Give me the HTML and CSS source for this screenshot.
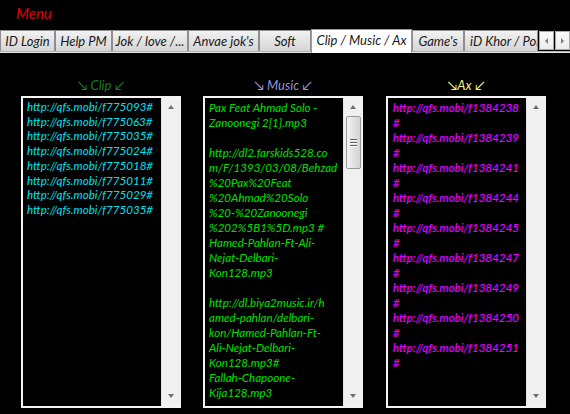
FILE: index.html
```html
<!DOCTYPE html>
<html>
<head>
<meta charset="utf-8">
<link rel="stylesheet" href="styles.css">
</head>
<body>
<div class="menu">Menu</div>
<div class="tabs">
  <div class="tab w55">ID Login</div>
  <div class="tab w56">Help PM</div>
  <div class="tab w76">Jok / love /...</div>
  <div class="tab w71">Anvae jok's</div>
  <div class="tab w52">Soft</div>
  <div class="tab sel w101">Clip / Music / Ax</div>
  <div class="tab w52">Game's</div>
  <div class="tab w74 cut">iD Khor / Pol</div>
  <div class="arrows">
    <div class="abtn"><span class="tri-l"></span></div>
    <div class="abtn"><span class="tri-r"></span></div>
  </div>
</div>
<div class="panels">
  <div class="col">
    <div class="head clip">↘ Clip ↙</div>
    <div class="box">
      <div class="content c-clip">
        <div>http://qfs.mobi/f775093#</div>
        <div>http://qfs.mobi/f775063#</div>
        <div>http://qfs.mobi/f775035#</div>
        <div>http://qfs.mobi/f775024#</div>
        <div>http://qfs.mobi/f775018#</div>
        <div>http://qfs.mobi/f775011#</div>
        <div>http://qfs.mobi/f775029#</div>
        <div>http://qfs.mobi/f775035#</div>
      </div>
      <div class="sb"><span class="up"></span><span class="down"></span></div>
    </div>
  </div>
  <div class="col">
    <div class="head music">↘ Music ↙</div>
    <div class="box">
      <div class="content c-music">
        <div>Pax Feat Ahmad Solo -</div>
        <div>Zanoonegi 2[1].mp3</div>
        <div>&nbsp;</div>
        <div>http://dl2.farskids528.co</div>
        <div>m/F/1393/03/08/Behzad</div>
        <div>%20Pax%20Feat</div>
        <div>%20Ahmad%20Solo</div>
        <div>%20-%20Zanoonegi</div>
        <div>%202%5B1%5D.mp3 #</div>
        <div>Hamed-Pahlan-Ft-Ali-</div>
        <div>Nejat-Delbari-</div>
        <div>Kon128.mp3</div>
        <div>&nbsp;</div>
        <div>http://dl.biya2music.ir/h</div>
        <div>amed-pahlan/delbari-</div>
        <div>kon/Hamed-Pahlan-Ft-</div>
        <div>Ali-Nejat-Delbari-</div>
        <div>Kon128.mp3#</div>
        <div>Fallah-Chapoone-</div>
        <div>Kija128.mp3</div>
      </div>
      <div class="sb"><span class="up"></span><span class="thumb"><i></i><i></i><i></i></span><span class="down"></span></div>
    </div>
  </div>
  <div class="col">
    <div class="head ax">↘Ax ↙</div>
    <div class="box">
      <div class="content c-ax">
        <div>http://qfs.mobi/f1384238</div><div>#</div>
        <div>http://qfs.mobi/f1384239</div><div>#</div>
        <div>http://qfs.mobi/f1384241</div><div>#</div>
        <div>http://qfs.mobi/f1384244</div><div>#</div>
        <div>http://qfs.mobi/f1384245</div><div>#</div>
        <div>http://qfs.mobi/f1384247</div><div>#</div>
        <div>http://qfs.mobi/f1384249</div><div>#</div>
        <div>http://qfs.mobi/f1384250</div><div>#</div>
        <div>http://qfs.mobi/f1384251</div><div>#</div>
      </div>
      <div class="sb"><span class="up"></span><span class="down"></span></div>
    </div>
  </div>
</div>
</body>
</html>
```
FILE: styles.css
```css
html, body {
  margin: 0;
  padding: 0;
  background: #000;
  width: 570px;
  height: 414px;
  overflow: hidden;
  font-family: Lato, "Open Sans", sans-serif;
  font-style: italic;
  font-weight: 400;
}
.menu {
  height: 29px;
  box-sizing: border-box;
  padding: 4px 0 0 16px;
  color: #e00000;
  font-size: 15px;
  line-height: 18px;
}
.tabs {
  display: flex;
  align-items: flex-end;
  height: 24px;
  position: relative;
  box-sizing: border-box;
}
.tabs::after {
  content: "";
  position: absolute;
  left: 0;
  right: 0;
  bottom: 0;
  height: 2px;
  background: #e6e6e6;
  border-top: 1px solid #b0b0b0;
  box-sizing: border-box;
}
.tab {
  box-sizing: border-box;
  height: 21px;
  margin-bottom: 2px;
  border: 1px solid #8e8e8e;
  border-bottom: none;
  background: linear-gradient(#f2f2f2, #e3e3e3 50%, #d6d6d6);
  color: #1a1a1a;
  font-size: 13px;
  line-height: 20px;
  text-align: center;
  white-space: nowrap;
  overflow: hidden;
  flex: none;
}
.tab.sel {
  height: 24px;
  margin-bottom: 0;
  background: #fff;
  border-color: #9a9a9a;
  line-height: 21px;
  position: relative;
  z-index: 1;
}
.tab.cut { text-align: left; padding-left: 5px; }
.w55 { width: 55px; }
.w56 { width: 57px; }
.w76 { width: 76px; }
.w71 { width: 71px; }
.w52 { width: 52px; }
.w101 { width: 101px; }
.w74 { width: 74px; }
.arrows {
  display: flex;
  gap: 1px;
  margin-bottom: 3px;
  margin-left: 1px;
  flex: none;
}
.abtn {
  width: 15px;
  height: 19px;
  box-sizing: border-box;
  border: 1px solid #a8a8a8;
  background: linear-gradient(#fafafa, #ececec);
  display: flex;
  align-items: center;
  justify-content: center;
}
.tri-l {
  width: 0; height: 0;
  border-top: 3px solid transparent;
  border-bottom: 3px solid transparent;
  border-right: 3px solid #6a7fa8;
}
.tri-r {
  width: 0; height: 0;
  border-top: 3px solid transparent;
  border-bottom: 3px solid transparent;
  border-left: 3px solid #6a7fa8;
}
.panels {
  display: flex;
  gap: 22px;
  padding-left: 21px;
  padding-top: 24px;
}
.col {
  width: 160px;
  display: flex;
  flex-direction: column;
}
.col:last-child { margin-left: 1px; }
.head {
  height: 19px;
  text-align: center;
  font-size: 13px;
  line-height: 16px;
}
.head.clip { color: #1b7d1b; }
.head.music { color: #9494d6; }
.head.ax { color: #f0f08a; }
.box {
  height: 312px;
  box-sizing: border-box;
  border: 2px solid #f4f4f4;
  border-right-width: 1px;
  display: flex;
  background: #000;
}
.content {
  flex: 1;
  overflow: hidden;
  padding: 2px 0 0 4px;
  font-size: 11.6px;
  line-height: 15px;
  white-space: nowrap;
}
.c-clip { color: #00e0f4; line-height: 14.7px; }
.c-music { color: #00e000; padding-left: 4px; }
.c-ax { color: #f000ff; padding-left: 5px; text-shadow: -0.4px 0 0 rgba(80,0,255,0.6); }
.sb {
  width: 18px;
  flex: none;
  background: #f0f0f0;
  border-left: 1px solid #e4e4e4;
  display: flex;
  flex-direction: column;
  align-items: center;
  position: relative;
}
.up {
  width: 0; height: 0;
  margin-top: 7px;
  border-left: 3.5px solid transparent;
  border-right: 3.5px solid transparent;
  border-bottom: 4px solid #707070;
}
.down {
  width: 0; height: 0;
  margin-top: auto;
  margin-bottom: 8px;
  border-left: 3.5px solid transparent;
  border-right: 3.5px solid transparent;
  border-top: 4px solid #707070;
}
.thumb {
  margin-top: 7px;
  width: 15px;
  height: 53px;
  box-sizing: border-box;
  border: 1px solid #9a9a9a;
  border-radius: 2px;
  background: linear-gradient(90deg, #f4f4f4, #e2e2e2 50%, #d4d4d4);
  display: flex;
  flex-direction: column;
  align-items: center;
  justify-content: center;
  gap: 1px;
}
.thumb i {
  display: block;
  width: 7px;
  height: 1px;
  background: #606060;
  border-bottom: 1px solid #fafafa;
}
```
